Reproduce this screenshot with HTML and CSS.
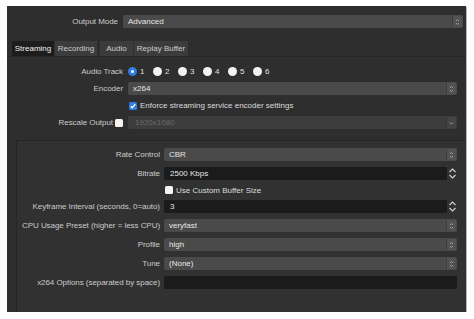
FILE: index.html
```html
<!DOCTYPE html>
<html lang="en">
<head>
  <meta charset="UTF-8" />
  <title>Output Settings</title>
  <link rel="stylesheet" href="styles.css">
</head>
<body>
  <div class="window">
    <div class="row mode-row">
      <span class="label">Output Mode</span>
      <div class="combo">
        <span>Advanced</span>
        <span class="spin"><svg width="5" height="8" viewBox="0 0 5 8"><path d="M1 3 2.5 1.5 4 3M1 5l1.5 1.5L4 5" /></svg></span>
      </div>
    </div>

    <div class="tabs">
      <span class="tab active">Streaming</span>
      <span class="tab">Recording</span>
      <span class="tab audio">Audio</span>
      <span class="tab replay">Replay Buffer</span>
    </div>

    <div class="page">
      <div class="row">
        <span class="label">Audio Track</span>
        <div class="radios">
          <label class="radio"><span class="dot checked"></span>1</label>
          <label class="radio"><span class="dot"></span>2</label>
          <label class="radio"><span class="dot"></span>3</label>
          <label class="radio"><span class="dot"></span>4</label>
          <label class="radio"><span class="dot"></span>5</label>
          <label class="radio"><span class="dot"></span>6</label>
        </div>
      </div>
      <div class="row">
        <span class="label">Encoder</span>
        <div class="combo">
          <span>x264</span>
          <span class="spin"><svg width="5" height="8" viewBox="0 0 5 8"><path d="M1 3 2.5 1.5 4 3M1 5l1.5 1.5L4 5" /></svg></span>
        </div>
      </div>
      <div class="row">
        <span class="label"></span>
        <label class="check"><span class="box checked"><svg width="8" height="8" viewBox="0 0 8 8"><path d="M1.8 4.2 3.3 5.7 6.3 2.2" /></svg></span>Enforce streaming service encoder settings</label>
      </div>
      <div class="row">
        <span class="label">Rescale Output <span class="box"></span></span>
        <div class="combo disabled">
          <span>1920x1080</span>
          <span class="spin"><svg width="5" height="8" viewBox="0 0 5 8"><path d="M1 3.5 2.5 5 4 3.5" /></svg></span>
        </div>
      </div>

      <div class="group">
        <div class="row">
          <span class="label">Rate Control</span>
          <div class="combo">
            <span>CBR</span>
            <span class="spin"><svg width="5" height="8" viewBox="0 0 5 8"><path d="M1 3 2.5 1.5 4 3M1 5l1.5 1.5L4 5" /></svg></span>
          </div>
        </div>
        <div class="row">
          <span class="label">Bitrate</span>
          <div class="spinbox">
            <span class="field">2500 Kbps</span>
            <svg class="arrows" width="9" height="13" viewBox="0 0 9 13"><path d="M1.5 5 4.5 2 7.5 5M1.5 8l3 3 3-3" /></svg>
          </div>
        </div>
        <div class="row short">
          <span class="label"></span>
          <label class="check"><span class="box"></span>Use Custom Buffer Size</label>
        </div>
        <div class="row">
          <span class="label">Keyframe Interval (seconds, 0=auto)</span>
          <div class="spinbox">
            <span class="field">3</span>
            <svg class="arrows" width="9" height="13" viewBox="0 0 9 13"><path d="M1.5 5 4.5 2 7.5 5M1.5 8l3 3 3-3" /></svg>
          </div>
        </div>
        <div class="row">
          <span class="label">CPU Usage Preset (higher = less CPU)</span>
          <div class="combo">
            <span>veryfast</span>
            <span class="spin"><svg width="5" height="8" viewBox="0 0 5 8"><path d="M1 3 2.5 1.5 4 3M1 5l1.5 1.5L4 5" /></svg></span>
          </div>
        </div>
        <div class="row">
          <span class="label">Profile</span>
          <div class="combo">
            <span>high</span>
            <span class="spin"><svg width="5" height="8" viewBox="0 0 5 8"><path d="M1 3 2.5 1.5 4 3M1 5l1.5 1.5L4 5" /></svg></span>
          </div>
        </div>
        <div class="row">
          <span class="label">Tune</span>
          <div class="combo">
            <span>(None)</span>
            <span class="spin"><svg width="5" height="8" viewBox="0 0 5 8"><path d="M1 3 2.5 1.5 4 3M1 5l1.5 1.5L4 5" /></svg></span>
          </div>
        </div>
        <div class="row">
          <span class="label">x264 Options (separated by space)</span>
          <span class="field text"></span>
        </div>
      </div>
    </div>
  </div>
</body>
</html>
```

FILE: styles.css
```css
* {
  box-sizing: border-box;
}
body {
  margin: 0;
  background: #fff;
  font-family: "Liberation Sans", Arial, sans-serif;
  font-size: 8px;
  line-height: 13px;
  color: #d4d4d4;
}
.window {
  display: flex;
  flex-direction: column;
  margin: 6px 0 0 7px;
  width: 459px;
  height: 306px;
  background: #2e2e2e;
  box-shadow: 1px 1px 0 #b8b8b8;
  padding-top: 9px;
}
.row {
  display: flex;
  align-items: center;
  height: 13px;
  gap: 5px;
}
.row.short {
  height: 8px;
}
.label {
  flex: none;
  display: flex;
  align-items: center;
  justify-content: flex-end;
  gap: 2px;
  white-space: nowrap;
  color: #cbcbcb;
  letter-spacing: -0.05px;
}
.mode-row .label {
  width: 111px;
}
.mode-row .combo {
  width: 340px;
}

/* combo boxes */
.combo {
  display: flex;
  align-items: center;
  width: 329px;
  height: 13px;
  background: #4a4a4a;
  border-radius: 2px;
  color: #e6e6e6;
  padding-left: 5px;
}
.combo > span:first-child {
  flex: 1;
}
.combo .spin {
  display: flex;
  align-items: center;
  justify-content: center;
  width: 10px;
  height: 11px;
  margin-right: 1px;
  border-left: 1px solid #3c3c3c;
  background: #525252;
}
.combo .spin path {
  fill: none;
  stroke: #a8a8a8;
  stroke-width: 0.9;
}
.combo.disabled {
  background: #3d3d3d;
  color: #6a6a6a;
  padding-left: 7px;
}
.combo.disabled .spin {
  background: #444;
  border-left-color: #363636;
}

/* tabs */
.tabs {
  display: flex;
  gap: 1px;
  margin-top: 13px;
  padding-left: 5px;
  height: 16px;
  border-bottom: 1px solid #262626;
}
.tab {
  width: 42px;
  height: 15px;
  line-height: 15px;
  text-align: center;
  white-space: nowrap;
  background: #3c3c3c;
  color: #cdcdcd;
}
.tab.audio {
  width: 33px;
  margin-left: 2px;
}
.tab.replay {
  width: 54px;
}
.tab.active {
  background: #1d1d1d;
  color: #f2f2f2;
}

/* stream page */
.page {
  flex: 1;
  display: flex;
  flex-direction: column;
  gap: 4px;
  padding-top: 8px;
}
.page > .row .label {
  width: 116px;
}
.radios {
  display: flex;
  gap: 8px;
}
.radio {
  display: flex;
  align-items: center;
  gap: 3px;
  width: 17px;
  color: #e0e0e0;
}
.dot {
  width: 9px;
  height: 9px;
  border-radius: 50%;
  background: #f2f2f2;
}
.dot.checked {
  border: 3px solid #2f7de1;
  background: #fff;
}
.check {
  display: flex;
  align-items: center;
  gap: 3px;
  color: #dcdcdc;
  padding-left: 1px;
}
.box {
  display: inline-flex;
  width: 8px;
  height: 8px;
  border-radius: 1.5px;
  background: #f4f4f4;
}
.box.checked {
  background: #2f7de1;
}
.box path {
  fill: none;
  stroke: #fff;
  stroke-width: 1.3;
}

/* group box */
.group {
  flex: 1;
  display: flex;
  flex-direction: column;
  gap: 6px;
  margin: 7px 0 0 9px;
  padding-top: 7px;
  background: #313131;
  border-top: 1px solid #262626;
  border-left: 1px solid #262626;
}
.group .row {
  gap: 4px;
}
.group .label {
  width: 143px;
}
.group .combo {
  width: 293px;
}
.spinbox {
  display: flex;
  align-items: center;
  gap: 1px;
  width: 293px;
}
.field {
  height: 13px;
  background: #1b1b1b;
  color: #e6e6e6;
  padding-left: 6px;
  border-radius: 1px;
}
.spinbox .field {
  flex: 1;
}
.field.text {
  width: 293px;
}
.arrows path {
  fill: none;
  stroke: #d0d0d0;
  stroke-width: 1.2;
}
```
